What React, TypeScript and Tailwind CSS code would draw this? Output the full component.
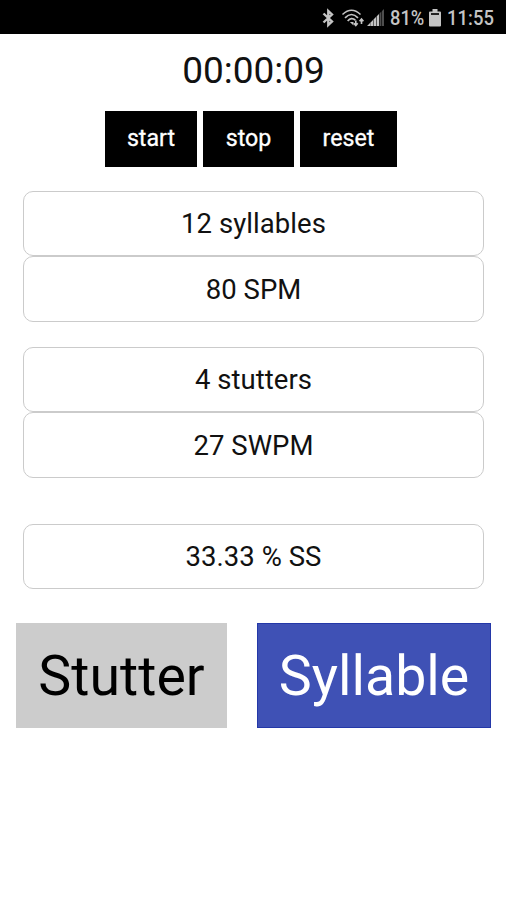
function StatusBar() {
  return (
    <header className="flex h-[34px] items-center justify-end bg-black pt-[2px] pr-[12px] text-[#c4c4c4]">
      {/* bluetooth */}
      <svg width="14" height="20" viewBox="0 0 14 20" fill="none" stroke="currentColor" strokeWidth="2.4">
        <path d="M1.500 5.500 10 13.500 6.300 17V3L10 6.500 1.500 14.500" />
      </svg>
      {/* wifi with data arrows */}
      <svg className="ml-[5px]" width="25" height="20" viewBox="0 0 25 20" fill="none" stroke="currentColor">
        <path d="M1.500 6.500Q10.500-2 19.500 6.500" strokeWidth="1.500" />
        <path d="M4 9.800Q10.500 3.200 17 9.800" strokeWidth="1.700" />
        <path d="M6.700 13Q10.500 8.600 14.300 12.200" strokeWidth="1.800" />
        <path d="M8.800 14h3.700v3.500z" fill="currentColor" stroke="none" />
        <path d="M14.800 12.500v5M12.900 15.200l1.900 2.300 1.900-2.300" strokeWidth="1.600" />
        <path d="M20.500 16v-5M18.600 13.300l1.900-2.300 1.900 2.300" strokeWidth="1.600" />
      </svg>
      {/* signal */}
      <svg className="ml-[1px]" width="18" height="20" viewBox="0 0 18 20" fill="currentColor">
        <path d="M0 18 3 15V18zM3.300 18v-3.300l2.700-2.700V18zM6.500 18v-6.500l2.700-2.700V18z" />
        <path d="M9.700 18V8.300l2.300-2.300V18z" />
        <path d="M12.500 18V5.500l1.900-1.900V18zM15 18V3L17 1V18z" opacity=".4" />
      </svg>
      <span className="ml-[5px] w-[35px] text-[21px] leading-[20px] font-medium whitespace-nowrap">
        <span className="inline-block origin-left scale-x-[.87]">81%</span>
      </span>
      <svg className="ml-[4px]" width="12" height="20" viewBox="0 0 12 20" fill="currentColor">
        <path d="M3.500 1h5v2.500h2.500q1 0 1 1V17.500q0 1-1 1H1q-1 0-1-1V4.500q0-1 1-1h2.500z" />
        <path d="M2 5h8v2h-8z" fill="#222" />
      </svg>
      <span className="ml-[6px] w-[47px] text-[21px] leading-[20px] font-medium whitespace-nowrap">
        <span className="inline-block origin-left scale-x-[.88]">11:55</span>
      </span>
    </header>
  );
}

function Stat({ children }: { children: string }) {
  return (
    <div className="flex h-[65.500px] items-center justify-center rounded-[10px] border border-[#cbcbcb] pt-[1px] text-[27.500px] tracking-[0.050px]">
      {children}
    </div>
  );
}

export default function App() {
  return (
    <div className="h-[900px] w-[506px] overflow-hidden bg-white font-['Roboto',sans-serif] text-[#111]">
      <StatusBar />

      <div className="mt-[15px] pl-[1px] text-center text-[37px] leading-[44px]">00:00:09</div>

      {/* Timer controls */}
      <div className="mt-[18px] ml-[105px] flex gap-[6px] text-[23.200px] leading-[53px] text-white">
        <button className="h-[56px] w-[92px] bg-black pb-[2px] [-webkit-text-stroke:0.3px]">start</button>
        <button className="h-[56px] w-[91px] bg-black pb-[2px] [-webkit-text-stroke:0.3px]">stop</button>
        <button className="h-[56px] w-[97px] bg-black pb-[2px] [-webkit-text-stroke:0.3px]">reset</button>
      </div>

      {/* Counters */}
      <div className="mt-[23.500px] mr-[22px] ml-[23px]">
        <Stat>12 syllables</Stat>
        <Stat>80 SPM</Stat>
        <div className="mt-[25px]">
          <Stat>4 stutters</Stat>
          <Stat>27 SWPM</Stat>
        </div>
        <div className="mt-[46px]">
          <Stat>33.33 % SS</Stat>
        </div>
      </div>

      <div className="mt-[34px] flex justify-between pr-[15px] pl-[16px] text-[55.500px]">
        <button className="h-[105px] w-[211px] bg-[#cccccc] pt-[2px] text-black">Stutter</button>
        <button className="h-[105px] w-[234px] border border-[#2438a8] bg-[#3f51b5] pt-[2px] text-white">Syllable</button>
      </div>
    </div>
  );
}
